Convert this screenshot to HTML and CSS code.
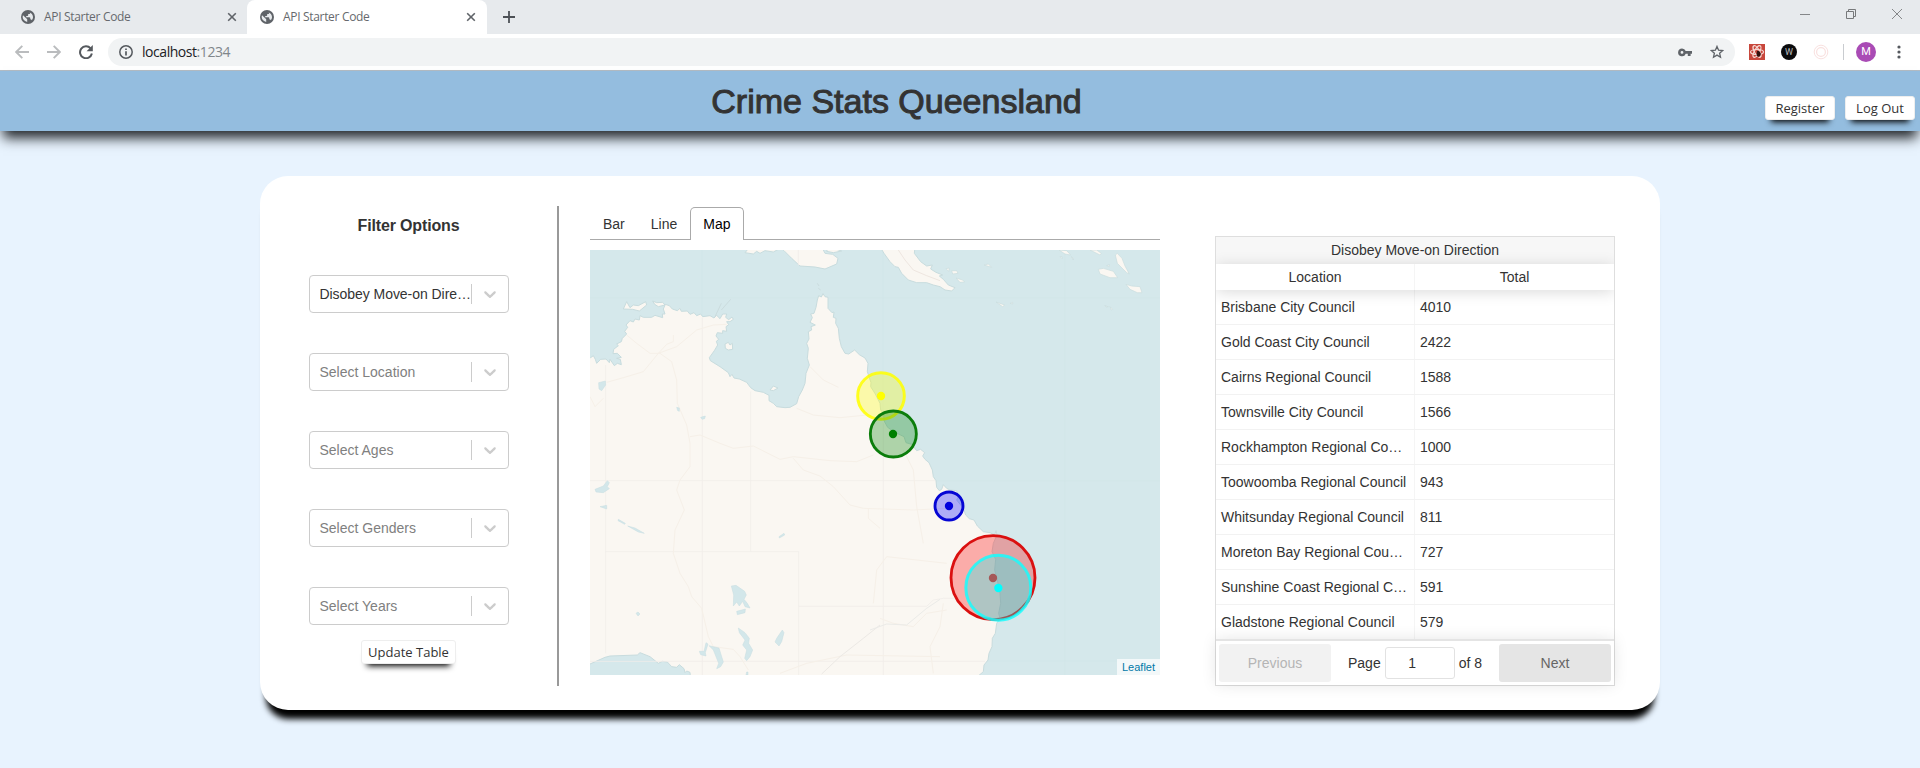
FILE: index.html
```html
<!DOCTYPE html>
<html lang="en">
<head>
<meta charset="utf-8">
<title>API Starter Code</title>
<link rel="stylesheet" href="styles.css">
</head>
<body>
<svg width="0" height="0" class="defs">
  <symbol id="globe" viewBox="0 0 14 14"><circle cx="7" cy="7" r="7" fill="#5f6368"/><path d="M2 5.2 5.2 8.300 6.200 9.300V11.900A5 5 0 0 1 2 5.200ZM8 2.200C10.500 2.700 12 4.700 12 7c0 1.300-.5 2.400-1.200 3.300-.3-.7-.8-1-1.500-1V8.100c0-.6-.3-.9-.9-.9H5.200V5.900h1.300c.4 0 .7-.3.700-.7V4h1c.6 0 1-.4 1-1z" fill="#e7eaed"/></symbol>
  <symbol id="cross" viewBox="0 0 10 10"><path d="M1.200 1.200 8.800 8.800M8.800 1.200 1.200 8.800" stroke="#5f6368" stroke-width="1.600"/></symbol>
  <symbol id="chevron" viewBox="0 0 20 20"><path d="M4.516 7.548c.436-.446 1.043-.481 1.576 0L10 11.295l3.908-3.747c.533-.481 1.141-.446 1.574 0 .436.445.408 1.197 0 1.615-.406.418-4.695 4.502-4.695 4.502a1.095 1.095 0 0 1-1.576 0S4.924 9.581 4.516 9.163s-.436-1.170 0-1.615z" fill="#ccc"/></symbol>
</svg>

<div class="tabstrip">
  <div class="btab">
    <svg width="14" height="14"><use href="#globe"/></svg><span class="btab-title">API Starter Code</span>
    <svg width="10" height="10"><use href="#cross"/></svg>
  </div>
  <div class="btab btab-active">
    <svg width="14" height="14"><use href="#globe"/></svg><span class="btab-title">API Starter Code</span>
    <svg width="10" height="10"><use href="#cross"/></svg>
  </div>
  <svg class="newtab" width="12" height="12" viewBox="0 0 12 12"><path d="M6 0V12M0 6H12" stroke="#4d5156" stroke-width="1.800"/></svg>
  <div class="winctl">
    <svg width="10" height="10" viewBox="0 0 10 10"><path d="M0 5.500H10" stroke="#858789"/></svg>
    <svg width="10" height="10" viewBox="0 0 10 10" fill="none" stroke="#77797b"><path d="M.5 2.500H7.500V9.500H.5ZM2.500 2.500V.5H9.500V7.500H7.500"/></svg>
    <svg width="10" height="10" viewBox="0 0 10 10"><path d="M0 0 10 10M10 0 0 10" stroke="#858789"/></svg>
  </div>
</div>

<div class="toolbar">
  <div class="nav">
    <svg width="14" height="14" viewBox="0 0 14 14" fill="none" stroke="#babcbe" stroke-width="1.900"><path d="M14 7H1.500M7.300.800 1.200 7l6.100 6.200"/></svg>
    <svg width="14" height="14" viewBox="0 0 14 14" fill="none" stroke="#babcbe" stroke-width="1.900"><path d="M0 7H12.500M6.700.800 12.800 7l-6.100 6.200"/></svg>
    <svg width="14" height="14" viewBox="0 0 14 14"><path d="M11.600 3.300A6 6 0 1 0 12.900 8.600" fill="none" stroke="#55595e" stroke-width="2"/><path d="M13.800 0V6.200H7.600Z" fill="#55595e"/></svg>
  </div>
  <div class="omnibox">
    <svg width="14" height="14" viewBox="0 0 14 14"><circle cx="7" cy="7" r="6.200" fill="none" stroke="#55595e" stroke-width="1.500"/><path d="M7 6.200V10.400M7 3.500V5" stroke="#55595e" stroke-width="1.700"/></svg>
    <span class="url">localhost<span class="port">:1234</span></span>
    <svg class="key" width="14" height="9" viewBox="0 0 14 9"><path fill="#5f6368" fill-rule="evenodd" d="M4 .5A3.900 3.900 0 0 1 7.700 3H14V5.700H12.600V8H9.800V5.700H7.700A3.900 3.900 0 1 1 4 .5ZM4 3A1.400 1.400 0 1 0 4 5.800 1.400 1.400 0 0 0 4 3Z"/></svg>
    <svg width="14" height="14" viewBox="0 0 14 14"><path d="M7 1.400 8.600 5.200 12.700 5.500 9.600 8.200 10.500 12.200 7 10.100 3.500 12.200 4.400 8.200 1.300 5.500 5.400 5.200Z" fill="none" stroke="#5f6368" stroke-width="1.300"/></svg>
  </div>
  <div class="exts">
    <svg width="16" height="16" viewBox="0 0 16 16"><path d="M0 0H16V16H0Z" fill="#c8473c"/><g fill="none" stroke="#f6d9d4" stroke-width="1.200"><ellipse cx="8" cy="8" rx="6.500" ry="2.500"/><ellipse cx="8" cy="7.500" rx="6.500" ry="2.500" transform="rotate(60 8 7.500)"/><ellipse cx="8" cy="7.500" rx="6.500" ry="2.500" transform="rotate(120 8 7.500)"/></g><path d="M8 7 10 7 11 8 12 10 11 12 9 13 7.500 11.500Z" fill="#33110f"/></svg>
    <span class="wave">W</span>
    <svg width="16" height="16" viewBox="0 0 16 16" fill="none" stroke="#f9e1e0"><circle cx="8" cy="8" r="6.800"/><circle cx="8" cy="8" r="4.400" stroke-width="1.200"/></svg>
    <span class="sep"></span>
    <span class="avatar">M</span>
    <svg class="dots" width="4" height="14" viewBox="0 0 4 14" fill="#55595e"><circle cx="2" cy="2" r="1.600"/><circle cx="2" cy="7" r="1.600"/><circle cx="2" cy="12" r="1.600"/></svg>
  </div>
</div>

<header class="header">
  <h1 class="title">Crime Stats Queensland</h1>
  <div class="auth"><button class="btn">Register</button><button class="btn">Log Out</button></div>
</header>

<main class="card">
  <section class="filters">
    <h2 class="filters-title">Filter Options</h2>
    <div class="select"><span class="value chosen">Disobey Move-on Dire…</span><span class="arrow"><svg width="20" height="20"><use href="#chevron"/></svg></span></div>
    <div class="select"><span class="value">Select Location</span><span class="arrow"><svg width="20" height="20"><use href="#chevron"/></svg></span></div>
    <div class="select"><span class="value">Select Ages</span><span class="arrow"><svg width="20" height="20"><use href="#chevron"/></svg></span></div>
    <div class="select"><span class="value">Select Genders</span><span class="arrow"><svg width="20" height="20"><use href="#chevron"/></svg></span></div>
    <div class="select"><span class="value">Select Years</span><span class="arrow"><svg width="20" height="20"><use href="#chevron"/></svg></span></div>
    <button class="btn update">Update Table</button>
  </section>

  <section class="charts">
    <div class="tabs"><span class="tab">Bar</span><span class="tab">Line</span><span class="tab tab-on">Map</span></div>
    <div class="map">
      <svg class="map-svg" width="570" height="425" viewBox="30 180 1710 1275">
        <rect x="30" y="180" width="1710" height="1275" fill="#d5e8eb"/>
        <g stroke="#d2e5e8" stroke-width="2"><path d="M367 180V1455M910 180V1455M1454 180V1455M30 323H1740M30 872H1740M30 1414H1740"/></g>
        <g fill="#faf7f2" stroke="#c8dcde" stroke-width="3" stroke-linejoin="round">
          <path d="M20 497 32 503 40 497 46 508 50 520 62 508 78 507 88 518 90 508 103 527 112 520 124 524 121 508 110 505 124 502 112 490 99 491 101 478 115 467 110 462 124 455 127 445 140 432 134 424 143 412 138 405 150 392 160 396 165 387 178 390 180 377 190 382 215 382 225 376 248 383 247 372 255 372 250 357 256 343 268 347 277 357 292 362 300 355 304 364 322 363 330 373 342 368 350 377 362 372 368 380 390 377 402 384 410 376 420 386 428 372 440 372 437 382 446 389 456 381 460 388 450 395 440 395 446 404 438 410 440 424 428 422 428 430 412 428 408 438 416 448 409 454 413 465 403 482 388 503 391 512 420 530 445 548 450 560 456 553 462 564 478 567 500 577 512 593 525 602 550 607 567 616 567 632 580 640 590 650 615 653 630 652 650 641 656 620 667 600 675 580 678 550 688 525 682 505 685 475 680 460 687 447 685 425 695 420 693 410 706 405 690 397 697 383 692 372 702 370 708 352 712 330 716 317 724 321 729 311 735 320 744 322 744 355 756 368 762 366 760 382 768 385 767 400 775 415 778 445 784 470 795 490 806 492 824 480 838 494 855 504 864 520 862 545 873 578 872 590 886 612 900 640 902 660 911 670 912 692 923 712 945 727 972 740 978 758 995 763 1010 782 1022 778 1034 788 1028 798 1035 808 1047 818 1057 840 1060 860 1068 872 1070 892 1078 902 1085 898 1090 884 1100 895 1110 900 1130 902 1135 920 1130 930 1150 955 1157 975 1168 986 1182 990 1192 1008 1210 1025 1230 1028 1244 1035 1248 1022 1251 1035 1240 1060 1236 1085 1247 1108 1244 1140 1252 1170 1260 1210 1262 1240 1256 1270 1260 1285 1250 1300 1246 1330 1237 1345 1236 1370 1227 1390 1224 1410 1212 1425 1210 1445 1197 1456 1185 1470H332L330 1447 320 1443 315 1448 312 1436 298 1424 290 1432 275 1430 262 1416 247 1414 235 1420 210 1400 180 1388 172 1395 90 1398 75 1402 30 1422 20 1425Z"/>
          <path d="M130 357 140 335 150 353 160 345 175 347 197 335 200 345 178 363 158 358ZM218 333 230 338 248 337 255 345 235 350 224 343ZM435 462 445 457 450 465 457 460 458 478 445 480 436 475ZM570 600 580 588 594 594 580 602Z"/>
          <path d="M495 188 510 170 600 170 612 182 635 205 660 228 705 231 735 237 770 222 774 205 758 193 735 190 725 170 610 170 580 186 555 182 540 190 530 184 520 192ZM745 170 785 183 760 188 740 184Z"/>
          <path d="M900 170 912 190 930 215 945 230 955 232 965 250 985 270 1010 278 1040 278 1060 285 1080 290 1095 300 1115 303 1125 293 1105 285 1090 268 1078 258 1088 255 1068 247 1052 237 1057 225 1040 228 1022 215 1003 190 1005 170Z"/>
          <path d="M1098 236 1108 234 1106 244ZM1115 242 1130 242 1134 250 1118 252ZM1128 264 1148 270 1154 276 1140 277ZM1212 225 1225 222 1235 232ZM1248 336 1274 345 1268 350ZM1290 340 1298 337 1298 342ZM1437 180 1460 182 1472 195 1455 192ZM1440 200 1446 200 1446 206ZM1474 200 1480 205 1480 210ZM1530 180 1550 180 1564 190 1560 195ZM1555 238 1570 235 1600 244 1613 263 1590 263 1560 252ZM1606 195 1612 190 1626 205 1635 228 1648 252 1640 248 1612 220ZM1638 283 1655 288 1680 290 1686 308 1672 308 1650 298ZM1574 347 1585 350 1580 351ZM1590 350 1598 358 1594 360ZM1580 227 1588 224 1588 230Z" stroke-width="2"/>
          <path d="M712 280 717 288M715 295 722 300M424 340 405 380M452 328 424 360M285 375" stroke="#cbdcde"/>
        </g>
        <g fill="none" stroke="#f1ede9" stroke-width="2.500">
          <path d="M77 525V1390M367 383V1455M512 605V1085M77 1085H656V1455M656 1249H1040L1060 1230 1090 1225H1120L1160 1245M655 180V226M30 872H1065M910 700V1455M30 1414H1215"/>
        </g>
        <g fill="none" stroke="#f6f0e8" stroke-width="3">
          <path d="M80 577 130 563 190 545 235 490 260 463 280 455V435M140 435 170 460 210 490 240 490 275 515 290 570 292 640 320 705 330 760V830L300 870 290 900 313 960 285 1020 280 1090 300 1150 325 1190 335 1220 365 1255 385 1340 400 1370 460 1378 480 1400 505 1440M235 490 290 470 350 420 400 405 440 403M330 740 360 735 420 760 460 775 520 768 600 808 640 800 750 812 830 815 880 795M640 805 670 840 720 858 760 890 810 945 850 955 1000 960 1100 955M690 530 730 570 775 592M650 655 700 675 780 683 860 675M865 955V985L900 1015M880 1240 890 1140 920 1100 1100 1120M970 780 1000 840 1010 950 1030 1060M900 1285 940 1300 1000 1310 1040 1270 1100 1260M600 1450 680 1420 800 1395 1080 1400M1090 1240 1080 1310 1050 1370 1060 1450M30 620 45 650 70 625"/>
          <path d="M725 1452 780 1400 850 1345 900 1305" stroke="#ece9e5"/><path d="M870 1320 920 1302 980 1305 1040 1255 1080 1228" stroke="#ebebe8"/><path d="M955 180 975 210 1000 240 1040 257 1080 272" stroke="#eee6e0"/>
        </g>
        <g fill="#d3e7ea" stroke="#c6dde0" stroke-width="1.500">
          <path d="M56 578 76 573 77 585 65 602 57 597ZM45 898 70 888 82 872 88 878 82 890 88 896 70 908 48 906ZM60 950 80 946V957ZM115 988 136 1000 134 1003 114 992ZM143 1008 165 1014 193 1030 175 1026ZM290 652 298 654 298 664 293 662ZM362 682 376 678 374 686 366 688ZM597 1040 612 1030 614 1035 598 1044ZM168 1270 174 1266 180 1272 174 1278ZM454 1188 468 1186 494 1204 499 1215 492 1228 502 1240 510 1254 495 1250 488 1234 478 1248 470 1236 460 1248 461 1215ZM470 1264 496 1257 495 1268 472 1274ZM475 1314 495 1328 508 1345 506 1360 518 1380 510 1400 500 1412 494 1405 500 1380 488 1365 495 1350 478 1328ZM607 1320 612 1328 605 1355 597 1368 585 1356 590 1345ZM387 1367 417 1374 430 1416 422 1430 410 1436 416 1420 400 1380ZM358 1384 372 1384 378 1358 384 1362 376 1388 378 1398 362 1394ZM500 1446 504 1446 504 1455 498 1455Z"/>
        </g>
        <g stroke-width="9" fill-opacity=".3">
          <circle cx="903" cy="618" r="70" fill="#ff0" stroke="#ff0" stroke-opacity=".85"/><circle cx="903" cy="618" r="12.500" fill="#ff0" fill-opacity="1" stroke="none"/>
          <circle cx="940" cy="732" r="69" fill="#008000" stroke="#0b7d0b" stroke-width="8.500"/><circle cx="939" cy="732" r="12.500" fill="#008000" fill-opacity="1" stroke="none"/>
          <circle cx="1107" cy="948" r="42" fill="#00f" stroke="#0505d4" stroke-width="8.500"/><circle cx="1107" cy="948" r="12.500" fill="#00d" fill-opacity="1" stroke="none"/>
          <circle cx="1239" cy="1163" r="126" fill="#f00" stroke="#da1010" stroke-width="8.500"/><circle cx="1239" cy="1164" r="12.500" fill="#ec1010" fill-opacity="1" stroke="none"/>
          <circle cx="1255" cy="1193" r="97.500" fill="#0ff" stroke="#1ff" stroke-opacity=".82"/><circle cx="1255" cy="1194" r="12.500" fill="#0ff" fill-opacity="1" stroke="none"/>
        </g>
      </svg>
      <span class="attribution">Leaflet</span>
    </div>
  </section>

  <section class="table">
    <div class="group">Disobey Move-on Direction</div>
    <div class="row head"><span class="cell">Location</span><span class="cell">Total</span></div>
    <div class="row"><span class="cell">Brisbane City Council</span><span class="cell">4010</span></div>
    <div class="row"><span class="cell">Gold Coast City Council</span><span class="cell">2422</span></div>
    <div class="row"><span class="cell">Cairns Regional Council</span><span class="cell">1588</span></div>
    <div class="row"><span class="cell">Townsville City Council</span><span class="cell">1566</span></div>
    <div class="row"><span class="cell">Rockhampton Regional Co…</span><span class="cell">1000</span></div>
    <div class="row"><span class="cell">Toowoomba Regional Council</span><span class="cell">943</span></div>
    <div class="row"><span class="cell">Whitsunday Regional Council</span><span class="cell">811</span></div>
    <div class="row"><span class="cell">Moreton Bay Regional Cou…</span><span class="cell">727</span></div>
    <div class="row"><span class="cell">Sunshine Coast Regional C…</span><span class="cell">591</span></div>
    <div class="row"><span class="cell">Gladstone Regional Council</span><span class="cell">579</span></div>
    <div class="pager">
      <span class="page-btn disabled">Previous</span>
      <span class="page-info">Page <span class="page-num">1</span> of 8</span>
      <span class="page-btn">Next</span>
    </div>
  </section>
</main>
</body>
</html>
```
FILE: styles.css
```css
* { box-sizing: border-box; }
body {
  margin: 0;
  height: 768px;
  overflow: hidden;
  background: #e8f3fe;
  font: 14px/16px "Liberation Sans", Arial, sans-serif;
  color: #333;
}
svg { display: block; flex: none; }
.defs { position: absolute; }

/* browser window */
.tabstrip { display: flex; height: 34px; background: #e7eaed; }
.btab {
  display: flex;
  align-items: center;
  width: 247px;
  padding: 0 10px 0 21px;
  font: 12px/16px "Open Sans", "Noto Sans", sans-serif;
  letter-spacing: -0.32px;
  color: #66696d;
}
.btab-active { width: 240px; padding: 0 11px 0 13px; background: #fff; border-radius: 8px 8px 0 0; }
.btab-title { flex: 1; margin-left: 9px; }
.newtab { margin: 11px 0 0 16px; }
.winctl { display: flex; gap: 36px; margin: 9px 18px 0 auto; }
.toolbar {
  display: flex;
  align-items: center;
  height: 37px;
  background: #fff;
  border-bottom: 1px solid #b3bcc4;
}
.nav { display: flex; gap: 18px; margin-left: 15px; width: 93px; }
.omnibox {
  display: flex;
  align-items: center;
  width: 1627px;
  height: 28px;
  padding: 0 11px;
  border-radius: 14px;
  background: #f1f3f4;
}
.url { flex: 1; margin-left: 9px; font: 14px/20px "Open Sans", "Noto Sans", sans-serif; letter-spacing: -0.45px; color: #202124; }
.port { color: #80868b; }
.key { margin-right: 18px; }
.exts { display: flex; align-items: center; gap: 16px; margin-left: 14px; }
.wave {
  width: 16px;
  height: 16px;
  border-radius: 50%;
  background: #0b0b0d;
  color: #b9bbbd;
  font: 9px/16px Roboto, sans-serif;
  text-align: center;
}
.sep { width: 1px; height: 16px; margin-left: -2px; background: #c9ccd0; }
.avatar {
  width: 20px;
  height: 20px;
  margin-left: -4px;
  border-radius: 50%;
  background: #a94bb5;
  color: #fff;
  font: 11px/20px Roboto, sans-serif;
  text-align: center;
}
.dots { margin-left: 5px; }

/* page header */
.header {
  position: relative;
  display: flex;
  height: 60px;
  background: #94bddf;
  box-shadow: 0 10px 12px -3px #22262a;
}
.title {
  width: 1793px;
  margin: 0;
  font-size: 34px;
  font-weight: 400;
  line-height: 60px;
  text-align: center;
  -webkit-text-stroke: 1px #333;
}
.auth {
  position: absolute;
  right: 5px;
  top: 25px;
  display: flex;
  gap: 10px;
}
.btn {
  width: 70px;
  height: 24px;
  padding: 0;
  border: 1px solid #eee;
  border-radius: 3px;
  background: #fff;
  box-shadow: 0 8px 6px -6px #000;
  font: 13px/20px "Open Sans", "Noto Sans", sans-serif;
  color: #333;
}

/* dashboard */
.card {
  display: flex;
  width: 1400px;
  height: 534px;
  margin: 45px auto 0;
  padding: 30px 45px 0 0;
  border-radius: 28px;
  background: #fff;
  box-shadow: 0 15px 6px -6px #000;
}
.filters {
  display: flex;
  flex-direction: column;
  align-items: center;
  width: 299px;
  height: 480px;
  border-right: 2px solid #999;
}
.filters-title { margin: 12px 0 41px; font-size: 16px; line-height: 16px; letter-spacing: -0.15px; }
.select {
  display: flex;
  align-items: center;
  width: 200px;
  height: 38px;
  margin-bottom: 40px;
  border: 1px solid #ccc;
  border-radius: 4px;
}
.value { flex: 1; min-width: 0; padding-left: 10px; white-space: nowrap; color: #808080; }
.chosen { color: #333; letter-spacing: -0.05px; }
.arrow { flex: none; width: 37px; height: 20px; padding-left: 8px; border-left: 1px solid #ccc; }
.update { width: 95px; margin-top: -25px; }

.charts { width: 570px; margin-left: 31px; }
.tabs { display: flex; height: 34px; padding-top: 1px; border-bottom: 1px solid #aaa; }
.tab { padding: 9px 13px 0; }
.tab-on {
  height: 33px;
  padding: 8px 12px 0;
  border: 1px solid #aaa;
  border-bottom: 0;
  border-radius: 5px 5px 0 0;
  background: #fff;
  color: #000;
  box-shadow: 0 1px #fff;
}
.map { position: relative; margin-top: 10px; height: 425px; }
.attribution {
  position: absolute;
  right: 0;
  bottom: 0;
  padding: 0 5px;
  background: rgba(255, 255, 255, 0.7);
  color: #0078a8;
  font-size: 11px;
}

.table {
  width: 400px;
  height: 450px;
  margin: 30px 0 0 55px;
  border: 1px solid #dedede;
}
.group { height: 27px; background: #f7f7f7; line-height: 27px; text-align: center; }
.row { display: grid; grid-template-columns: 199px 199px; height: 35px; border-bottom: 1px solid #f2f2f2; }
.cell { padding: 9px 0 0 5px; border-right: 1px solid #f5f5f5; white-space: nowrap; }
.cell:last-child { border-right: 0; }
.head {
  position: relative;
  height: 26px;
  border: 0;
  background: #fff;
  box-shadow: 0 2px 15px rgba(0, 0, 0, 0.15);
  clip-path: inset(-27px 0 -25px 0);
  text-align: center;
}
.head .cell { padding: 5px 0 0; }
.pager {
  position: relative;
  display: flex;
  justify-content: space-between;
  height: 46px;
  margin-top: -1px;
  padding: 3px;
  border-top: 2px solid #e4e4e4;
  background: #fff;
  box-shadow: 0 0 15px rgba(0, 0, 0, 0.1);
}
.page-btn { width: 112px; height: 38px; border-radius: 3px; background: #e5e5e5; color: #666; line-height: 38px; text-align: center; }
.disabled { background: #f2f2f2; color: #b5b5b5; }
.page-info { display: flex; gap: 4px; line-height: 38px; }
.page-num { width: 70px; height: 32px; margin-top: 3px; padding-right: 15px; border: 1px solid #e2e2e2; border-radius: 3px; line-height: 31px; text-align: center; }
```
